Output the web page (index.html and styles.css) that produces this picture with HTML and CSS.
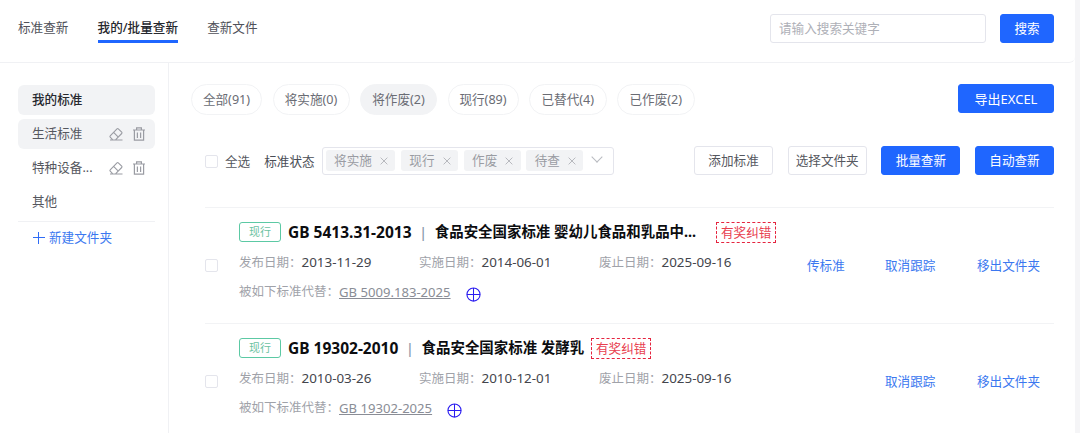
FILE: index.html
```html
<!DOCTYPE html>
<html lang="zh-CN">
<head>
    <meta charset="UTF-8">
    <title>我的/批量查新</title>
    <link rel="stylesheet" href="styles.css">
</head>
<body>
    <svg class="defs" width="0" height="0">
        <symbol id="edit" viewBox="0 0 14 14">
            <path d="M1 13h12.5M3.6 12.6 1.2 10.2a.9.9 0 0 1 0-1.3L8 1.8a.9.9 0 0 1 1.3 0l3.4 3.4a.9.9 0 0 1 0 1.3l-6 6.1M4.6 5.4l4.2 4.2" fill="none" stroke="currentColor" stroke-width="1.1"/>
        </symbol>
        <symbol id="trash" viewBox="0 0 14 14">
            <path d="M1 3h12M4.6 3V.9h4.8V3M2.4 3v10.2h9.2V3M5.4 5.4v5.6M8.6 5.4v5.6" fill="none" stroke="currentColor" stroke-width="1.2"/>
        </symbol>
        <symbol id="close" viewBox="0 0 10 10">
            <path d="M.8.8l8.4 8.4M9.2.8.8 9.2" fill="none" stroke="currentColor" stroke-width="1"/>
        </symbol>
        <symbol id="cross" viewBox="0 0 16 16">
            <circle cx="8" cy="8" r="7" fill="none" stroke="#2a1cf0" stroke-width="1.2"/>
            <path d="M1 8h14M8 1v14" stroke="#2a1cf0" stroke-width="1.1"/>
        </symbol>
    </svg>

    <header class="topbar">
        <nav class="tabs">
            <a class="tab">标准查新</a>
            <a class="tab active">我的/批量查新</a>
            <a class="tab">查新文件</a>
        </nav>
        <div class="search">
            <input class="search-input" type="text" placeholder="请输入搜索关键字">
            <button class="btn primary search-btn">搜索</button>
        </div>
    </header>

    <div class="layout">
        <aside class="sidebar">
            <div class="side-item head">我的标准</div>
            <div class="side-item current">
                <span>生活标准</span>
                <span class="side-icons"><svg class="ico"><use href="#edit"/></svg><svg class="ico"><use href="#trash"/></svg></span>
            </div>
            <div class="side-item">
                <span>特种设备...</span>
                <span class="side-icons"><svg class="ico"><use href="#edit"/></svg><svg class="ico"><use href="#trash"/></svg></span>
            </div>
            <div class="side-item">其他</div>
            <div class="side-new"><span class="plus"></span>新建文件夹</div>
        </aside>

        <main class="content">
            <div class="chip-row">
                <div class="chips">
                    <span class="chip w1">全部(91)</span>
                    <span class="chip w2">将实施(0)</span>
                    <span class="chip w2 on">将作废(2)</span>
                    <span class="chip w1">现行(89)</span>
                    <span class="chip w3">已替代(4)</span>
                    <span class="chip w3">已作废(2)</span>
                </div>
                <button class="btn primary export">导出EXCEL</button>
            </div>

            <div class="filter-row">
                <span class="check"></span>
                <span class="all">全选</span>
                <span class="status-label">标准状态</span>
                <div class="select">
                    <span class="tag">将实施<svg class="x"><use href="#close"/></svg></span>
                    <span class="tag">现行<svg class="x"><use href="#close"/></svg></span>
                    <span class="tag">作废<svg class="x"><use href="#close"/></svg></span>
                    <span class="tag">待查<svg class="x"><use href="#close"/></svg></span>
                    <span class="arrow"></span>
                </div>
                <div class="actions">
                    <button class="btn">添加标准</button>
                    <button class="btn">选择文件夹</button>
                    <button class="btn primary">批量查新</button>
                    <button class="btn primary">自动查新</button>
                </div>
            </div>

            <section class="item">
                <span class="check"></span>
                <div class="item-body">
                    <div class="item-title">
                        <span class="badge">现行</span>
                        <b class="code">GB 5413.31-2013</b>
                        <i class="bar">|</i>
                        <b class="name">食品安全国家标准 婴幼儿食品和乳品中...</b>
                        <span class="prize p1">有奖纠错</span>
                    </div>
                    <div class="dates">
                        <span class="date"><em>发布日期：</em>2013-11-29</span>
                        <span class="date"><em>实施日期：</em>2014-06-01</span>
                        <span class="date"><em>废止日期：</em>2025-09-16</span>
                    </div>
                    <div class="replace">
                        <em>被如下标准代替：</em><a class="rep-link">GB 5009.183-2025</a>
                        <svg class="cross"><use href="#cross"/></svg>
                    </div>
                </div>
                <div class="ops">
                    <a class="op">传标准</a>
                    <a class="op">取消跟踪</a>
                    <a class="op">移出文件夹</a>
                </div>
            </section>

            <section class="item">
                <span class="check"></span>
                <div class="item-body">
                    <div class="item-title">
                        <span class="badge">现行</span>
                        <b class="code">GB 19302-2010</b>
                        <i class="bar">|</i>
                        <b class="name">食品安全国家标准 发酵乳</b>
                        <span class="prize">有奖纠错</span>
                    </div>
                    <div class="dates">
                        <span class="date"><em>发布日期：</em>2010-03-26</span>
                        <span class="date"><em>实施日期：</em>2010-12-01</span>
                        <span class="date"><em>废止日期：</em>2025-09-16</span>
                    </div>
                    <div class="replace">
                        <em>被如下标准代替：</em><a class="rep-link">GB 19302-2025</a>
                        <svg class="cross"><use href="#cross"/></svg>
                    </div>
                </div>
                <div class="ops">
                    <a class="op"></a>
                    <a class="op">取消跟踪</a>
                    <a class="op">移出文件夹</a>
                </div>
            </section>
        </main>
    </div>
</body>
</html>
```

FILE: styles.css
```css
* {
    box-sizing: border-box;
}
html, body {
    height: 433px;
    overflow: hidden;
}
body {
    margin: 0;
    width: 1080px;
    background: #fff;
    color: #4a4d55;
    font-family: "Noto Sans", "Noto Sans CJK SC", sans-serif;
    font-size: 12.6px;
    line-height: 18px;
    border-right: 5px solid #f5f5f7;
}
.defs {
    display: block;
    height: 0;
}
em, i {
    font-style: normal;
}

/* 顶部 */
.topbar {
    height: 63px;
    padding: 0 21px 0 18px;
    display: flex;
    align-items: flex-start;
    justify-content: space-between;
    border-bottom: 1px solid #f0f1f4;
    border-radius: 0 0 6px 0;
}
.tabs {
    display: flex;
    gap: 29.2px;
    padding-top: 19px;
}
.tab {
    height: 24px;
    color: #4f5159;
}
.tab.active {
    color: #26282e;
    font-weight: 500;
    border-bottom: 3px solid #1f66ff;
}
.search {
    display: flex;
    gap: 14px;
    padding-top: 14px;
}
.search-input {
    width: 216px;
    height: 29px;
    padding: 0 8px;
    border: 1px solid #e4e5ec;
    border-radius: 3px;
    font: inherit;
    outline: none;
}
.search-input::placeholder {
    color: #aeb0b7;
}
.btn {
    width: 79px;
    height: 29px;
    padding: 0;
    border: 1px solid #e4e5ec;
    border-radius: 3px;
    background: #fff;
    color: #55575e;
    font: inherit;
}
.btn.primary {
    background: #1f66ff;
    border-color: #1f66ff;
    color: #fff;
}
.search-btn {
    width: 54px;
}

/* 左侧 */
.layout {
    display: flex;
    height: 370px;
}
.sidebar {
    width: 169px;
    padding: 22px 13px 0 18px;
    border-right: 1px solid #f0f1f4;
    flex-shrink: 0;
}
.side-item {
    height: 30px;
    margin-bottom: 4px;
    padding: 0 9px 0 14px;
    display: flex;
    align-items: center;
    justify-content: space-between;
    border-radius: 6px;
    color: #55575e;
}
.side-item.head {
    background: #f2f3f5;
    color: #26282e;
    font-weight: 500;
}
.side-item.current {
    background: #f2f3f5;
}
.side-icons {
    display: flex;
    gap: 9px;
    color: #9a9ca3;
}
.ico {
    width: 14px;
    height: 14px;
}
.side-new {
    height: 32px;
    padding-left: 15px;
    display: flex;
    align-items: center;
    gap: 4px;
    border-top: 1px solid #f0f1f4;
    color: #3b78f0;
}
.plus {
    width: 12px;
    height: 12px;
    background:
        linear-gradient(#2f6cf6, #2f6cf6) center / 12px 1.4px no-repeat,
        linear-gradient(#2f6cf6, #2f6cf6) center / 1.4px 12px no-repeat;
}

/* 右侧 */
.content {
    flex: 1;
    padding: 21px 21px 0 22px;
}
.chip-row {
    display: flex;
    justify-content: space-between;
    height: 63px;
}
.chips {
    display: flex;
    gap: 10.5px;
}
.chip {
    height: 31px;
    border: 1px solid #f2f3f5;
    border-radius: 16px;
    text-align: center;
    line-height: 29px;
    color: #6a6c74;
}
.chip.w1 {
    width: 71px;
}
.chip.w2 {
    width: 77px;
}
.chip.w3 {
    width: 77.5px;
}
.chip.on {
    background: #f2f3f5;
}
.export {
    width: 96px;
    font-size: 13px;
}
.filter-row {
    margin-left: 14px;
    height: 60px;
    display: flex;
    align-items: flex-start;
}
.check {
    width: 13px;
    height: 13px;
    flex-shrink: 0;
    border: 1px solid #e4e5ec;
    border-radius: 2px;
    background: #fff;
}
.filter-row .check {
    margin-top: 8px;
}
.all {
    margin: 6px 14px 0 7px;
    color: #55575e;
}
.status-label {
    margin: 6px 7px 0 0;
}
.select {
    width: 292px;
    height: 28px;
    padding: 2px 3px;
    display: flex;
    align-items: flex-start;
    gap: 5.5px;
    border: 1px solid #e4e5ec;
    border-radius: 3px;
}
.tag {
    height: 21px;
    padding: 0 7.5px 0 8.5px;
    display: flex;
    align-items: center;
    gap: 8px;
    border-radius: 3px;
    background: #f2f3f5;
    color: #9a9ca3;
}
.x {
    width: 8px;
    height: 8px;
    color: #a8aab0;
}
.arrow {
    width: 8px;
    height: 8px;
    margin: 3px 0 0 4px;
    border-right: 1px solid #b8bac0;
    border-bottom: 1px solid #b8bac0;
    transform: rotate(45deg);
}
.actions {
    margin: -1px 0 0 auto;
    display: flex;
    gap: 14.67px;
}

/* 列表 */
.item {
    margin-left: 14px;
    height: 116px;
    display: flex;
    border-top: 1px solid #f2f3f5;
}
.item > .check {
    margin-top: 51px;
}
.item-body {
    margin-left: 21px;
    width: 546px;
    padding-top: 14px;
}
.item-title {
    height: 20px;
    display: flex;
    align-items: center;
    color: #0c0d10;
    white-space: nowrap;
}
.badge {
    width: 42px;
    height: 20px;
    border: 1px solid #5cc9a4;
    border-radius: 3px;
    color: #6cc2a2;
    font-size: 11px;
    line-height: 18px;
    text-align: center;
}
.code {
    margin-left: 7px;
    font-size: 15.5px;
    font-weight: 700;
}
.name {
    font-size: 14.45px;
    font-weight: 700;
}
.bar {
    margin: 0 7.5px;
    color: #8a9aab;
    font-size: 15px;
    font-weight: 500;
}
.prize {
    margin-left: 7px;
    width: 60px;
    height: 21px;
    border: 1px dashed #e5243f;
    color: #e8404f;
    line-height: 19px;
    text-align: center;
}
.prize.p1 {
    margin-left: 20px;
}
.dates {
    margin-top: 11px;
    display: flex;
    color: #43454c;
    font-size: 13.4px;
}
.date {
    width: 180px;
}
.date em, .replace em {
    color: #a0a2a9;
    font-size: 12.5px;
}
.replace {
    margin-top: 9px;
    display: flex;
    align-items: center;
}
.rep-link {
    color: #8a8d96;
    font-size: 13.1px;
    text-decoration: underline;
}
.cross {
    width: 15px;
    height: 15px;
    margin: 6px 0 0 15px;
}
.ops {
    flex: 1;
    padding: 49px 0 0 22px;
    display: flex;
}
.op {
    color: #3b78f0;
    white-space: nowrap;
}
.op:nth-child(1) {
    width: 78px;
}
.op:nth-child(2) {
    width: 92px;
}
```
